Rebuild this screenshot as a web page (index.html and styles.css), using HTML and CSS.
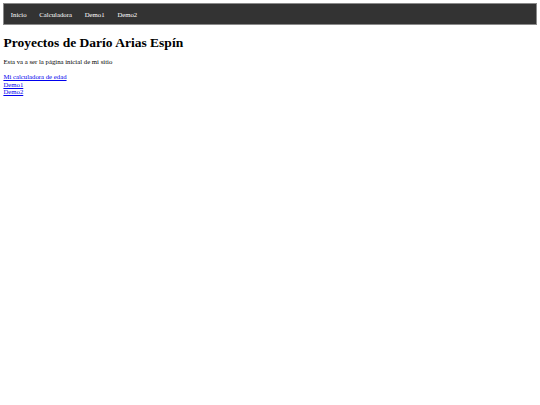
FILE: index.html
```html
<!DOCTYPE html>
<html lang="es">
<head>
<meta charset="utf-8">
<title>Proyectos de Darío Arias Espín</title>
<link rel="stylesheet" href="styles.css">
</head>
<body>
<ul class="menu">
  <li><a href="#">Inicio</a></li>
  <li><a href="#">Calculadora</a></li>
  <li><a href="#">Demo1</a></li>
  <li><a href="#">Demo2</a></li>
</ul>
<h1 class="title">Proyectos de Darío Arias Espín</h1>
<p class="intro">Esta va a ser la página inicial de mi sitio</p>
<div class="links">
  <a href="#">Mi calculadora de edad</a><br>
  <a href="#">Demo1</a><br>
  <a href="#">Demo2</a>
</div>
</body>
</html>
```
FILE: styles.css
```css
html, body {
  background: #fff;
}
body {
  margin: 3.4px;
  font-family: "Liberation Serif", "Times New Roman", serif;
  font-size: 6.75px;
  line-height: 7.7px;
  color: #000;
}
.menu {
  list-style: none;
  margin: 0;
  padding: 0;
  display: flex;
  background: #333;
  border: 1px solid #8a8a8a;
}
.menu li a {
  display: block;
  color: #fff;
  text-decoration: none;
  padding: 6.2px 6.4px;
}
.title {
  font-size: 13.5px;
  line-height: 15.5px;
  margin: 10px 0 7.5px;
}
.intro {
  margin: 6.75px 0;
}
.links a {
  color: #0000ee;
}
```
